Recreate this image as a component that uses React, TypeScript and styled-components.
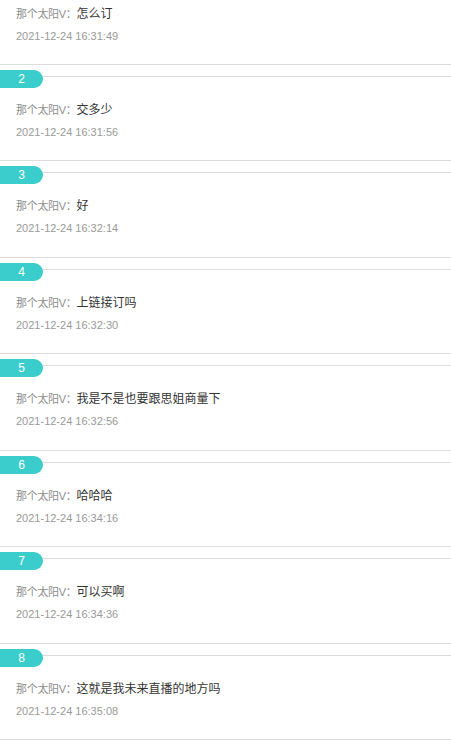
import styled, { createGlobalStyle } from "styled-components";

const messages = [
  { no: 1, text: "怎么订", time: "2021-12-24 16:31:49" },
  { no: 2, text: "交多少", time: "2021-12-24 16:31:56" },
  { no: 3, text: "好", time: "2021-12-24 16:32:14" },
  { no: 4, text: "上链接订吗", time: "2021-12-24 16:32:30" },
  { no: 5, text: "我是不是也要跟思姐商量下", time: "2021-12-24 16:32:56" },
  { no: 6, text: "哈哈哈", time: "2021-12-24 16:34:16" },
  { no: 7, text: "可以买啊", time: "2021-12-24 16:34:36" },
  { no: 8, text: "这就是我未来直播的地方吗", time: "2021-12-24 16:35:08" },
];

export default function App() {
  return (
    <>
      <GlobalStyle />
      <Page>
        <List>
          {messages.map((m) => (
            <Item key={m.no}>
              <Header>
                <Badge>{m.no}</Badge>
                <HeaderLine />
              </Header>
              <Message>
                <Author>那个太阳V：</Author>
                {m.text}
              </Message>
              <Time>{m.time}</Time>
            </Item>
          ))}
        </List>
      </Page>
    </>
  );
}

const GlobalStyle = createGlobalStyle`
  html, body {
    margin: 0;
    padding: 0;
    background: #fff;
  }
  body {
    font-family: "Liberation Sans", "Noto Sans CJK SC", sans-serif;
    overflow: hidden;
  }
`;

const Page = styled.div`
  width: 451px;
  height: 741px;
  overflow: hidden;
  background: #fff;
`;

const List = styled.ul`
  list-style: none;
  margin: -31.43px 0 0;
  padding: 0;
`;

const Item = styled.li`
  padding: 5px 0 18.43px;
  border-bottom: 1px solid #dcdcdc;
`;

const Header = styled.div`
  display: flex;
  align-items: flex-start;
  height: 18px;
`;

const Badge = styled.span`
  flex: 0 0 43px;
  height: 18px;
  line-height: 18px;
  background: #3bcccc;
  color: #fff;
  font-size: 12px;
  text-align: center;
  border-radius: 0 9px 9px 0;
`;

const HeaderLine = styled.div`
  flex: 1;
  margin-top: 6px;
  border-top: 1px solid #dcdcdc;
`;

const Message = styled.p`
  margin: 12px 0 0;
  padding-left: 16px;
  font-size: 12px;
  line-height: 20px;
  color: #333;
`;

const Author = styled.span`
  font-size: 11px;
  color: #8c8c8c;
  letter-spacing: -0.3px;
`;

const Time = styled.p`
  margin: 2px 0 0;
  padding-left: 16px;
  font-size: 11px;
  line-height: 20px;
  color: #999;
`;
